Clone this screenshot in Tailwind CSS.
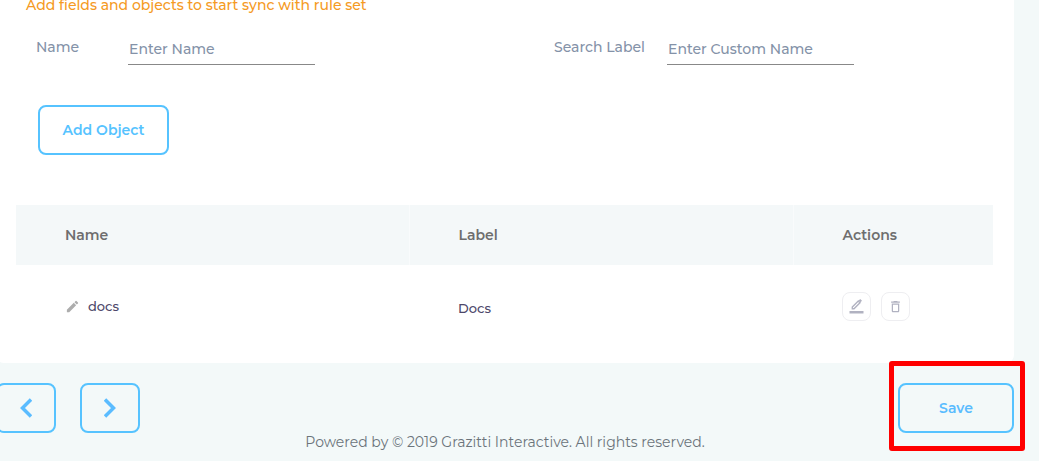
<!DOCTYPE html>
<html lang="en">
<head>
    <meta charset="UTF-8">
    <meta name="viewport" content="width=device-width, initial-scale=1.0">
    <title>Add Objects</title>
    <script src="https://cdn.jsdelivr.net/npm/@tailwindcss/browser@4"></script>
</head>
<body class="bg-[#f3f9f9] font-[Montserrat,Inter,sans-serif] text-[14px] leading-5 min-h-screen overflow-x-hidden">

    <main class="-ml-1 -mt-[5px] mr-[25px]">
        <form id="object-form">
            <section class="bg-white rounded-b-lg pb-4">
                <h2 class="pl-[30px] text-[#f59a23] font-medium">Add fields and objects to start sync with rule set</h2>

                <div class="grid grid-cols-2 gap-[58px] pl-10 pt-4 text-[#8492a8] font-medium">
                    <div class="flex">
                        <label for="object-name" class="w-[92px] shrink-0 pt-1.5">Name</label>
                        <input id="object-name" type="text" placeholder="Enter Name"
                            class="w-[187px] h-[34px] pt-[3px] pl-px border-b border-[#888] placeholder:text-[#8492a8] focus:outline-none">
                    </div>
                    <div class="flex">
                        <label for="object-label" class="w-[113px] shrink-0 pt-1.5">Search Label</label>
                        <input id="object-label" type="text" placeholder="Enter Custom Name"
                            class="w-[187px] h-[34px] pt-[3px] pl-px border-b border-[#888] placeholder:text-[#8492a8] focus:outline-none">
                    </div>
                </div>

                <button type="button"
                    class="block ml-[42px] mt-10 w-[131px] h-[50px] border-2 border-[#56c3ff] rounded-lg text-[#56c3ff] font-semibold hover:bg-sky-50">Add Object</button>

                <div class="mt-[50px] ml-5 mr-[21px]">
                    <table class="w-full table-fixed text-left">
                        <thead class="bg-[#f4f8f9] text-[#6e6e6e]">
                            <tr class="h-[60px]">
                                <th class="w-[393px] pl-[49px] font-semibold border-r border-[#f9fbfc]">Name</th>
                                <th class="w-[384px] pl-[49px] font-semibold border-r border-[#f9fbfc]">Label</th>
                                <th class="pl-[49px] font-semibold">Actions</th>
                            </tr>
                        </thead>
                        <tbody class="text-[13px] text-[#4c4769] font-medium">
                            <tr class="h-[82px]">
                                <td class="pl-[49px]">
                                    <div class="flex items-center gap-2">
                                        <svg class="size-[15px]" viewBox="0 0 24 24" fill="#adadad"><path d="M3 17.25V21h3.75L17.81 9.94l-3.75-3.75L3 17.25zM20.71 7.04a1 1 0 0 0 0-1.41l-2.34-2.34a1 1 0 0 0-1.41 0l-1.83 1.83 3.75 3.75 1.83-1.83z"/></svg>
                                        <span>docs</span>
                                    </div>
                                </td>
                                <td class="pl-[49px] pt-1">Docs</td>
                                <td class="pl-[49px]">
                                    <div class="flex gap-2.5">
                                        <button type="button" aria-label="Edit" class="size-[29px] flex items-center justify-center border border-[#eeeef1] rounded-lg">
                                            <svg class="w-[15px] h-[15px]" viewBox="0 0 15 15" fill="none">
                                                <path d="M3.300 9.700v-1.700l6-6 1.700 1.700-6 6z" stroke="#b1b2c1" stroke-width="1.400"/>
                                                <path d="M9.700 1.500 11.200 0l1.800 1.800-1.500 1.500z" fill="#b1b2c1"/>
                                                <path d="M.5 12h14v2.500H.5z" fill="#b1b2c1"/>
                                            </svg>
                                        </button>
                                        <button type="button" aria-label="Delete" class="size-[29px] flex items-center justify-center border border-[#eeeef1] rounded-lg">
                                            <svg class="size-[15px]" viewBox="0 0 24 24" fill="#b1b2c1"><path d="M6 19c0 1.100.9 2 2 2h8c1.100 0 2-.9 2-2V7H6v12zM8 9h8v10H8V9zM15.500 4l-1-1h-5l-1 1H5v2h14V4z"/></svg>
                                        </button>
                                    </div>
                                </td>
                            </tr>
                        </tbody>
                    </table>
                </div>
            </section>

            <div class="flex items-center gap-6 pt-5">
                <button type="button" aria-label="Previous" class="w-[60px] h-[50px] flex items-center justify-center border-2 border-[#56c3ff] rounded-lg">
                    <svg class="w-3 h-5" viewBox="0 0 12 20" fill="none" stroke="#5abcff" stroke-width="3.500"><path d="m11 1.500-8.500 8.500 8.500 8.500"/></svg>
                </button>
                <button type="button" aria-label="Next" class="w-[60px] h-[50px] flex items-center justify-center border-2 border-[#56c3ff] rounded-lg">
                    <svg class="w-3 h-5" viewBox="0 0 12 20" fill="none" stroke="#5abcff" stroke-width="3.500"><path d="m1 1.500 8.500 8.500-8.500 8.500"/></svg>
                </button>
                <div class="relative ml-auto">
                    <button type="submit"
                        class="block w-[116px] h-[50px] border-2 border-[#56c3ff] rounded-lg text-[#5abcff] font-semibold hover:bg-sky-50">Save</button>
                    <span class="absolute -left-[9px] -right-[11px] -top-[22px] -bottom-[18px] border-5 border-[#ff0000] rounded-[3px] pointer-events-none"></span>
                </div>
            </div>
        </form>

        <footer class="text-center leading-[18px] text-[#6b747b]">Powered by © 2019 Grazitti Interactive. All rights reserved.</footer>
    </main>

</body>
</html>
